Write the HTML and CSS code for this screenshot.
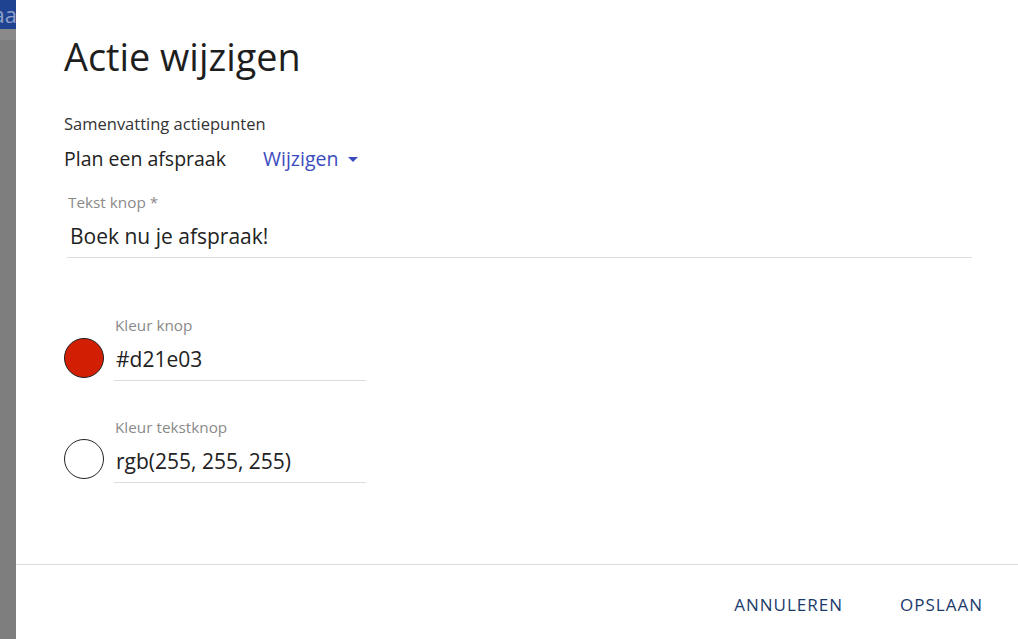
FILE: index.html
```html
<!DOCTYPE html>
<html lang="nl">
<head>
<meta charset="utf-8">
<link rel="stylesheet" href="styles.css">
</head>
<body>
<div class="backdrop">
  <div class="page-strip">
    <div class="strip-bar"><span class="strip-text">aa</span></div>
    <div class="strip-sub"></div>
    <div class="strip-rest"></div>
  </div>
  <div class="dialog">
    <div class="content">
      <h1 class="title">Actie wijzigen</h1>
      <div class="summary-label">Samenvatting actiepunten</div>
      <div class="summary-row">
        <span class="summary-value">Plan een afspraak</span>
        <span class="change-link">Wijzigen <svg class="caret" width="10" height="5" viewBox="0 0 10 5"><path d="M0 0h10L5 5z" fill="#3b4cc0"/></svg></span>
      </div>
      <div class="field field-wide">
        <div class="field-label">Tekst knop *</div>
        <div class="field-value">Boek nu je afspraak!</div>
      </div>
      <div class="color-row first">
        <div class="swatch swatch-red"></div>
        <div class="field field-color">
          <div class="field-label">Kleur knop</div>
          <div class="field-value">#d21e03</div>
        </div>
      </div>
      <div class="color-row second">
        <div class="swatch swatch-white"></div>
        <div class="field field-color">
          <div class="field-label">Kleur tekstknop</div>
          <div class="field-value">rgb(255, 255, 255)</div>
        </div>
      </div>
    </div>
    <div class="footer">
      <button class="btn">ANNULEREN</button>
      <button class="btn">OPSLAAN</button>
    </div>
  </div>
</div>
</body>
</html>
```

FILE: styles.css
```css
* { box-sizing: border-box; }
html, body { margin: 0; padding: 0; }
body {
  font-family: "Open Sans", "Noto Sans", sans-serif;
  width: 1018px;
  height: 639px;
  overflow: hidden;
  background: #fff;
}
.backdrop {
  display: flex;
  height: 639px;
}
.page-strip {
  width: 16px;
  display: flex;
  flex-direction: column;
  overflow: hidden;
}
.strip-bar {
  height: 29px;
  background: #1f4391;
  overflow: hidden;
  display: flex;
  justify-content: flex-end;
}
.strip-text {
  color: #8ea0c8;
  font-size: 22px;
  line-height: 29px;
  white-space: nowrap;
  flex: none;
  margin-right: -1px;
}
.strip-sub {
  height: 11px;
  background: #8a8a8a;
}
.strip-rest {
  flex: 1;
  background: #7e7e7e;
}
.dialog {
  flex: 1;
  display: flex;
  flex-direction: column;
  background: #fff;
}
.content {
  flex: 1;
  padding: 0 46px 0 48px;
}
.title {
  margin: 34px 0 0;
  font-size: 37.8px;
  font-weight: 400;
  color: #1e1e1e;
  line-height: 46px;
}
.summary-label {
  margin-top: 34px;
  font-size: 16.5px;
  color: #333;
  line-height: 20px;
}
.summary-row {
  display: flex;
  align-items: center;
  margin-top: 12px;
  font-size: 19.5px;
  line-height: 26px;
  color: #222;
}
.summary-value { width: 199px; }
.change-link {
  color: #3b4cc0;
  display: flex;
  align-items: center;
  gap: 10px;
}
.caret { margin-top: 1px; }
.field {
  border-bottom: 1px solid #dcdcdc;
}
.field-wide {
  margin: 20px 0 0 3px;
}
.field-label {
  font-size: 15.3px;
  color: #8a8a8a;
  line-height: 20px;
  padding-left: 1px;
}
.field-value {
  font-size: 21px;
  color: #222;
  line-height: 28px;
  padding: 10px 0 7px 3px;
}
.color-row {
  display: flex;
  align-items: flex-end;
  gap: 10px;
}
.color-row.first { margin-top: 57px; }
.color-row.second { margin-top: 36px; }
.swatch {
  width: 40px;
  height: 40px;
  border-radius: 50%;
  border: 1px solid #222;
  margin-bottom: 3px;
  flex: none;
}
.color-row.second .swatch { margin-bottom: 4px; }
.swatch-red { background: #d21e03; }
.swatch-white { background: #fff; }
.field-color {
  width: 252px;
}
.field-color .field-value { padding-left: 2px; }
.footer {
  height: 75px;
  border-top: 1px solid #dcdcdc;
  display: flex;
  justify-content: flex-end;
  align-items: center;
  gap: 57px;
  padding: 4px 35px 0 0;
}
.btn {
  background: none;
  border: none;
  padding: 0;
  font-family: inherit;
  font-size: 17px;
  letter-spacing: 1px;
  color: #1b3a6b;
  cursor: pointer;
}
```
